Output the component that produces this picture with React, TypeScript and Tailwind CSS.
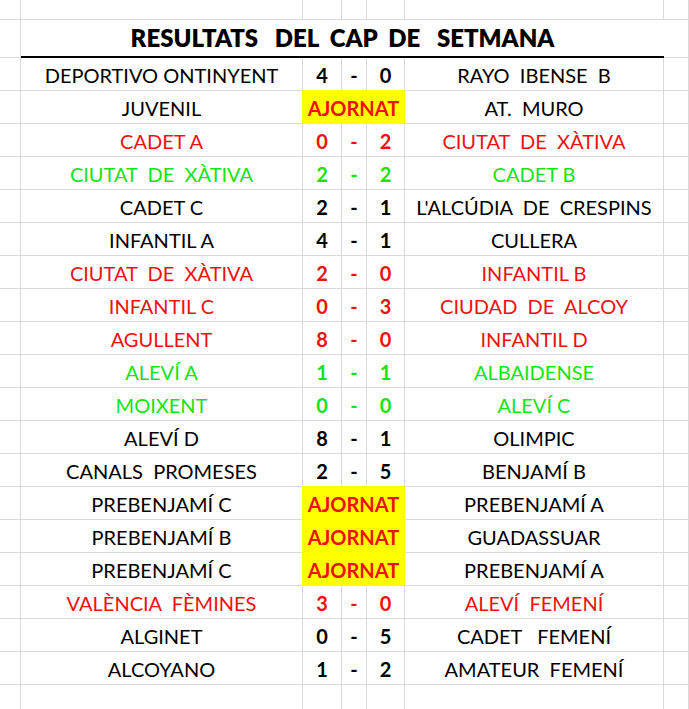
type Row = {
  home: string;
  a?: string;
  b?: string;
  away: string;
  color: "black" | "red" | "green";
};

const rows: Row[] = [
  { home: "DEPORTIVO ONTINYENT", a: "4", b: "0", away: "RAYO  IBENSE  B", color: "black" },
  { home: "JUVENIL", away: "AT.  MURO", color: "black" },
  { home: "CADET A", a: "0", b: "2", away: "CIUTAT  DE  XÀTIVA", color: "red" },
  { home: "CIUTAT  DE  XÀTIVA", a: "2", b: "2", away: "CADET B", color: "green" },
  { home: "CADET C", a: "2", b: "1", away: "L'ALCÚDIA  DE  CRESPINS", color: "black" },
  { home: "INFANTIL A", a: "4", b: "1", away: "CULLERA", color: "black" },
  { home: "CIUTAT  DE  XÀTIVA", a: "2", b: "0", away: "INFANTIL B", color: "red" },
  { home: "INFANTIL C", a: "0", b: "3", away: "CIUDAD  DE  ALCOY", color: "red" },
  { home: "AGULLENT", a: "8", b: "0", away: "INFANTIL D", color: "red" },
  { home: "ALEVÍ A", a: "1", b: "1", away: "ALBAIDENSE", color: "green" },
  { home: "MOIXENT", a: "0", b: "0", away: "ALEVÍ C", color: "green" },
  { home: "ALEVÍ D", a: "8", b: "1", away: "OLIMPIC", color: "black" },
  { home: "CANALS  PROMESES", a: "2", b: "5", away: "BENJAMÍ B", color: "black" },
  { home: "PREBENJAMÍ C", away: "PREBENJAMÍ A", color: "black" },
  { home: "PREBENJAMÍ B", away: "GUADASSUAR", color: "black" },
  { home: "PREBENJAMÍ C", away: "PREBENJAMÍ A", color: "black" },
  { home: "VALÈNCIA  FÈMINES", a: "3", b: "0", away: "ALEVÍ  FEMENÍ", color: "red" },
  { home: "ALGINET", a: "0", b: "5", away: "CADET   FEMENÍ", color: "black" },
  { home: "ALCOYANO", a: "1", b: "2", away: "AMATEUR  FEMENÍ", color: "black" },
];

const colorClass = {
  black: "text-black",
  red: "text-[#ee1111]",
  green: "text-[#14e414]",
};

// every cell draws its own right and bottom grid line, like a spreadsheet
const cell = "border-r border-b border-[#d9d9d9] flex justify-center items-start pt-[7px] leading-[20px] whitespace-pre";

export default function App() {
  return (
    <div
      className="h-[709px] w-[689px] overflow-hidden bg-white text-[20px] text-black"
      style={{ fontFamily: "Lato, 'Open Sans', sans-serif" }}
    >
      <div className="grid grid-cols-[21px_282px_39px_25px_38px_259px_1fr] grid-rows-[20px_38px_repeat(20,33px)]">
        {/* top empty row */}
        {Array.from({ length: 7 }).map((_, i) => (
          <div key={"t" + i} className="border-r border-b border-[#d9d9d9]" />
        ))}

        {/* title */}
        <div className="border-r border-b border-[#d9d9d9]" />
        <div className="col-span-5 border-b-2 border-black flex justify-center items-start pt-[8px] leading-[20px] text-[24px] font-extrabold whitespace-pre">
          {"RESULTATS   DEL  CAP  DE   SETMANA"}
        </div>
        <div className="border-r border-b border-[#d9d9d9]" />

        {rows.map((r, i) => {
          const c = colorClass[r.color];
          return (
            <div key={i} className="contents">
              <div className="border-r border-b border-[#d9d9d9]" />
              <div className={`${cell} ${c}`}>{r.home}</div>
              {r.a ? (
                <>
                  <div className={`${cell} ${c} font-bold`}>{r.a}</div>
                  <div className={`${cell} ${c} font-bold`}>-</div>
                  <div className={`${cell} ${c} font-bold`}>{r.b}</div>
                </>
              ) : (
                <div className="col-span-3 bg-[#ffff00] border-r border-b border-[#ffff00] shadow-[-1px_0_0_#ffff00,0_-1px_0_#ffff00,-1px_-1px_0_#ffff00] flex justify-center items-start pt-[7px] leading-[20px] font-bold text-[#ee1111]">
                  AJORNAT
                </div>
              )}
              <div className={`${cell} ${c}`}>{r.away}</div>
              <div className="border-r border-b border-[#d9d9d9]" />
            </div>
          );
        })}

        {/* trailing empty row */}
        {Array.from({ length: 7 }).map((_, i) => (
          <div key={"b" + i} className="border-r border-b border-[#d9d9d9]" />
        ))}
      </div>
    </div>
  );
}
